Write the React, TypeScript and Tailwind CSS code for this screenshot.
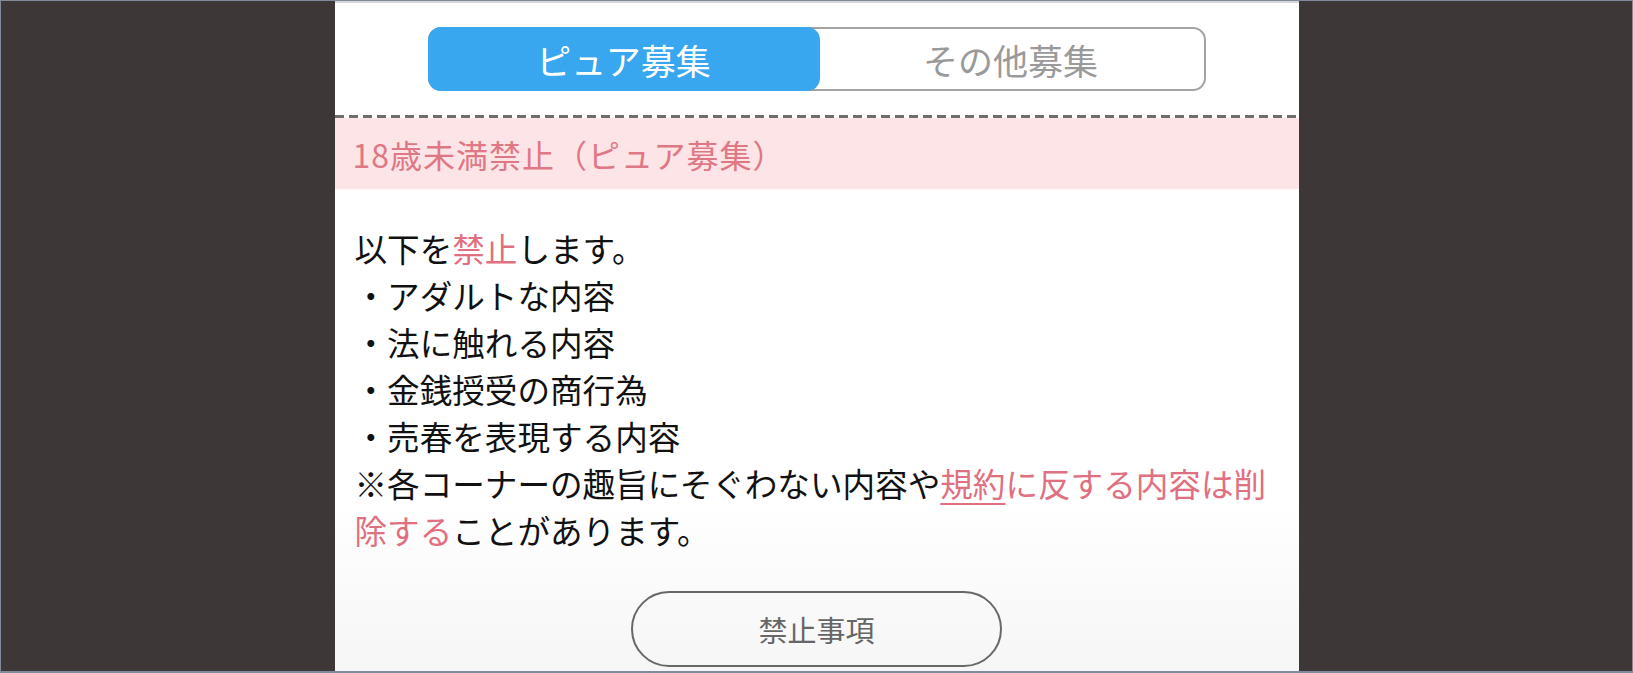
import React from "react";

const App: React.FC = () => {
    return (
        <div
            className="flex h-[673px] w-full border-x border-t border-b-2 border-[#7f8b9b] bg-[#3d3837]"
            style={{ fontFamily: '"Noto Sans CJK JP", "Noto Sans", sans-serif' }}
        >
            {/* left side */}
            <div className="flex-1 bg-[#3d3837]" />

            {/* main panel */}
            <div className="flex w-[964px] flex-col overflow-hidden border-t-2 border-[#d4d4d4] bg-white">
                {/* toggle */}
                <div className="flex justify-center pt-[24px]">
                    <div className="flex h-[64px] w-[778px] rounded-[13px] border-2 border-[#a3a3a3]">
                        <button className="-m-[2px] flex h-[64px] w-[392px] items-center justify-center rounded-[13px] bg-[#38a7ef] text-[35px] leading-none text-white">
                            ピュア募集
                        </button>
                        <button className="flex flex-1 items-center justify-center text-[35px] leading-none text-[#9a9a9a]">
                            その他募集
                        </button>
                    </div>
                </div>

                {/* dashed separator */}
                <div className="mt-[24px] h-[3px] bg-[repeating-linear-gradient(90deg,#6e6e6e_0px,#6e6e6e_9px,transparent_9px,transparent_14px)]" />

                {/* pink header */}
                <div className="flex h-[71px] items-center bg-[#fce4e7] pl-[18px] text-[32px] tracking-[1px] text-[#e07784]">
                    18歳未満禁止（ピュア募集）
                </div>

                {/* body */}
                <div className="flex flex-1 flex-col bg-gradient-to-b from-white from-65% to-[#f6f6f6] px-[20px] pt-[35px]">
                    <p className="text-[32.6px] leading-[47px] text-[#111]">
                        以下を<span className="text-[#e0707f]">禁止</span>します。
                        <br />・アダルトな内容
                        <br />・法に触れる内容
                        <br />・金銭授受の商行為
                        <br />・売春を表現する内容
                        <br />※各コーナーの趣旨にそぐわない内容や
                        <span className="text-[#e0707f]">
                            <span className="underline decoration-[2px] underline-offset-[6px]">規約</span>
                            に反する内容は削除する
                        </span>
                        ことがあります。
                    </p>

                    <div className="flex justify-center pt-[38px]">
                        <button className="flex h-[76px] w-[371px] shrink-0 items-center justify-center rounded-full border-2 border-[#686868] text-[29px] leading-none text-[#666]">
                            禁止事項
                        </button>
                    </div>
                </div>
            </div>

            {/* right side */}
            <div className="flex-1 bg-[#3d3837]" />
        </div>
    );
};

export default App;
